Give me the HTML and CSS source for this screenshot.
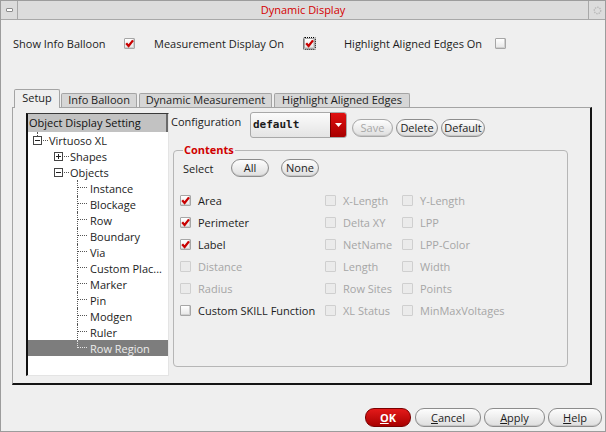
FILE: index.html
```html
<!DOCTYPE html>
<html>
<head>
<meta charset="utf-8">
<link rel="stylesheet" href="styles.css">
</head>
<body>
<div class="window">
  <div class="titlebar">
    <div class="tb-btn tb-left"><span class="tb-min"></span></div>
    <div class="tb-title">Dynamic Display</div>
    <div class="tb-btn tb-right">
      <svg width="9" height="9" viewBox="0 0 9 9"><circle cx="4.5" cy="4.5" r="3.2" fill="none" stroke="#b8b8b8" stroke-width="1.4" stroke-dasharray="1.4 1"/></svg>
    </div>
  </div>

  <div class="toprow">
    <span class="tl w1">Show Info Balloon</span>
    <span class="cb checked"><svg viewBox="0 0 11 11"><path d="M2.2 5.2 L4.6 8 L9 2.4" /></svg></span>
    <span class="tl w2">Measurement Display On</span>
    <span class="cb checked focus"><svg viewBox="0 0 11 11"><path d="M2.2 5.2 L4.6 8 L9 2.4" /></svg></span>
    <span class="tl w3">Highlight Aligned Edges On</span>
    <span class="cb"></span>
  </div>

  <div class="tabs">
    <div class="tab active t1">Setup</div>
    <div class="tab t2">Info Balloon</div>
    <div class="tab t3">Dynamic Measurement</div>
    <div class="tab t4">Highlight Aligned Edges</div>
  </div>

  <div class="panel">
    <div class="tree">
      <div class="tree-head">Object Display Setting</div>
      <div class="row root"><span class="exp minus"></span><span class="dots"></span><span class="lbl">Virtuoso XL</span></div>
      <div class="row lvl1"><span class="exp plus"></span><span class="dots"></span><span class="lbl">Shapes</span></div>
      <div class="row lvl1"><span class="exp minus"></span><span class="dots"></span><span class="lbl">Objects</span></div>
      <div class="row leaf first"><span class="branch"></span><span class="lbl">Instance</span></div>
      <div class="row leaf"><span class="branch"></span><span class="lbl">Blockage</span></div>
      <div class="row leaf"><span class="branch"></span><span class="lbl">Row</span></div>
      <div class="row leaf"><span class="branch"></span><span class="lbl">Boundary</span></div>
      <div class="row leaf"><span class="branch"></span><span class="lbl">Via</span></div>
      <div class="row leaf"><span class="branch"></span><span class="lbl">Custom Plac...</span></div>
      <div class="row leaf"><span class="branch"></span><span class="lbl">Marker</span></div>
      <div class="row leaf"><span class="branch"></span><span class="lbl">Pin</span></div>
      <div class="row leaf"><span class="branch"></span><span class="lbl">Modgen</span></div>
      <div class="row leaf"><span class="branch"></span><span class="lbl">Ruler</span></div>
      <div class="row leaf last selected"><span class="branch"></span><span class="lbl">Row Region</span></div>
    </div>

    <div class="setup">
      <div class="config">
        <span class="cfg-label">Configuration</span>
        <div class="combo">
          <span class="combo-text">default</span>
          <span class="combo-arrow"><svg width="7" height="4" viewBox="0 0 7 4"><path d="M0 0 L7 0 L3.5 4 Z" fill="#fff"/></svg></span>
        </div>
        <span class="btn disabled b-save">Save</span>
        <span class="btn b-delete">Delete</span>
        <span class="btn b-default">Default</span>
      </div>

      <div class="group">
        <span class="group-title">Contents</span>
        <div class="select-row">
          <span class="sel-label">Select</span>
          <span class="btn b-all">All</span>
          <span class="btn b-none">None</span>
        </div>
        <div class="grid">
          <div class="cell"><span class="cb checked"><svg viewBox="0 0 11 11"><path d="M2.2 5.2 L4.6 8 L9 2.4" /></svg></span><span>Area</span></div>
          <div class="cell dis"><span class="cb disabled"></span><span>X-Length</span></div>
          <div class="cell dis"><span class="cb disabled"></span><span>Y-Length</span></div>

          <div class="cell"><span class="cb checked"><svg viewBox="0 0 11 11"><path d="M2.2 5.2 L4.6 8 L9 2.4" /></svg></span><span>Perimeter</span></div>
          <div class="cell dis"><span class="cb disabled"></span><span>Delta XY</span></div>
          <div class="cell dis"><span class="cb disabled"></span><span>LPP</span></div>

          <div class="cell"><span class="cb checked"><svg viewBox="0 0 11 11"><path d="M2.2 5.2 L4.6 8 L9 2.4" /></svg></span><span>Label</span></div>
          <div class="cell dis"><span class="cb disabled"></span><span>NetName</span></div>
          <div class="cell dis"><span class="cb disabled"></span><span>LPP-Color</span></div>

          <div class="cell dis"><span class="cb disabled"></span><span>Distance</span></div>
          <div class="cell dis"><span class="cb disabled"></span><span>Length</span></div>
          <div class="cell dis"><span class="cb disabled"></span><span>Width</span></div>

          <div class="cell dis"><span class="cb disabled"></span><span>Radius</span></div>
          <div class="cell dis"><span class="cb disabled"></span><span>Row Sites</span></div>
          <div class="cell dis"><span class="cb disabled"></span><span>Points</span></div>

          <div class="cell"><span class="cb"></span><span>Custom SKILL Function</span></div>
          <div class="cell dis"><span class="cb disabled"></span><span>XL Status</span></div>
          <div class="cell dis"><span class="cb disabled"></span><span>MinMaxVoltages</span></div>
        </div>
      </div>
    </div>
  </div>

  <div class="footer">
    <span class="btn ok"><u>O</u>K</span>
    <span class="btn b-cancel"><u>C</u>ancel</span>
    <span class="btn b-apply"><u>A</u>pply</span>
    <span class="btn b-help"><u>H</u>elp</span>
  </div>
</div>
</body>
</html>
```

FILE: styles.css
```css
* { box-sizing: border-box; }

html, body {
  margin: 0;
  padding: 0;
  background: #efefef;
}

body {
  font-family: "Open Sans", "Noto Sans", sans-serif;
  font-size: 11px;
  color: #1c1c1c;
}

.window {
  width: 606px;
  height: 432px;
  border: 1px solid #9c9c9c;
  background: #efefef;
  display: flex;
  flex-direction: column;
}

/* title bar */
.titlebar {
  height: 19px;
  display: flex;
  background: #dcdcdc;
  border-bottom: 1px solid #a8a8a8;
}
.tb-btn {
  width: 17px;
  display: flex;
  align-items: center;
  justify-content: center;
}
.tb-left { border-right: 1px solid #a8a8a8; }
.tb-right { border-left: 1px solid #a8a8a8; }
.tb-min {
  width: 7px;
  height: 4px;
  border: 1px solid #8c8c8c;
  border-radius: 1px;
  background: #fff;
}
.tb-title {
  flex: 1;
  text-align: center;
  line-height: 18px;
  color: #d40000;
}

/* top row */
.toprow {
  display: flex;
  align-items: center;
  height: 18px;
  margin-top: 14px;
  padding-left: 12px;
}
.tl { display: inline-block; }
.w1 { width: 111px; }
.w2 { width: 150px; margin-left: 19px; }
.w3 { width: 151px; margin-left: 29px; }

/* checkbox */
.cb {
  display: inline-block;
  width: 11px;
  height: 11px;
  flex: none;
  border: 1px solid #a6a6a6;
  border-radius: 1px;
  background: linear-gradient(#ffffff, #e6e6e6);
  box-shadow: inset -1px -1px 0 #d0d0d0;
  position: relative;
}
.cb svg {
  display: block;
  width: 11px;
  height: 11px;
  margin: -1px 0 0 -1px;
}
.cb svg path {
  fill: none;
  stroke: #c80000;
  stroke-width: 2.3;
}
.cb.focus {
  outline: 1px dotted #000;
  outline-offset: 0;
}
.cb.disabled {
  background: #ebebeb;
  border-color: #cfcfcf;
  box-shadow: none;
}

/* tabs */
.tabs {
  display: flex;
  align-items: flex-end;
  height: 18px;
  margin-top: 37px;
  padding-left: 13px;
  position: relative;
  z-index: 2;
}
.tab {
  height: 14px;
  line-height: 12px;
  text-align: center;
  background: #d6d6d6;
  border: 1px solid #a4a4a4;
  border-bottom: none;
  border-radius: 2px 2px 0 0;
  color: #1c1c1c;
}
.tab.active {
  height: 19px;
  margin-bottom: -1px;
  line-height: 16px;
  background: #efefef;
}
.t1 { width: 46px; }
.t2 { width: 76px; margin-left: 1px; }
.t3 { width: 133px; margin-left: 2px; }
.t4 { width: 136px; margin-left: 2px; }

/* panel */
.panel {
  width: 580px;
  height: 278px;
  margin-left: 11px;
  border-top: 1px solid #a4a4a4;
  border-left: 1px solid #a4a4a4;
  border-right: 2px solid #141414;
  border-bottom: 2px solid #141414;
  display: flex;
  align-items: flex-start;
  padding: 4px 0 0 13px;
}

/* tree */
.tree {
  width: 143px;
  height: 263px;
  margin-top: 1px;
  background: #fff;
  border-left: 2px solid #111;
  border-top: 1px solid #3a3a3a;
  border-right: 1px solid #e4e4e4;
  border-bottom: 1px solid #e4e4e4;
  padding-right: 0;
}
.tree-head {
  height: 18px;
  line-height: 17px;
  padding-left: 1px;
  background: #c2c2c2;
  border-right: 2px solid #6a6a6a;
  color: #111;
}
.row {
  height: 16px;
  display: flex;
  align-items: center;
  position: relative;
  color: #1c1c1c;
}
.exp {
  width: 9px;
  height: 9px;
  border: 1px solid #444;
  background: #fff;
  position: relative;
  flex: none;
}
.exp::before {
  content: "";
  position: absolute;
  left: 1px;
  top: 3px;
  width: 5px;
  height: 1px;
  background: #222;
}
.exp.plus::after {
  content: "";
  position: absolute;
  left: 3px;
  top: 1px;
  width: 1px;
  height: 5px;
  background: #222;
}
.dots {
  width: 5px;
  margin: 0 1px 0 1px;
  border-top: 1px dotted #555;
  flex: none;
}
.root { padding-left: 5px; }
.root::before {
  content: "";
  position: absolute;
  left: 9px;
  top: 0;
  height: 4px;
  border-left: 1px dotted #555;
}
.lvl1 { padding-left: 26px; }
.leaf { padding-left: 49px; }
.branch {
  width: 11px;
  height: 16px;
  flex: none;
  align-self: flex-start;
  border-left: 1px dotted #555;
  position: relative;
  margin-right: 2px;
}
.leaf.last .branch { height: 8px; }
.branch::after {
  content: "";
  position: absolute;
  left: 0;
  top: 7px;
  width: 9px;
  border-top: 1px dotted #555;
}
.row.selected {
  background: #7d7d7d;
  color: #ececec;
}
.row.selected .branch,
.row.selected .branch::after {
  border-color: #e6e6e6;
}

/* setup column */
.setup {
  margin-left: 1px;
  flex: 1;
}
.config {
  display: flex;
  align-items: flex-start;
  height: 26px;
}
.cfg-label {
  width: 80px;
  line-height: 20px;
  padding-left: 1px;
}
.combo {
  width: 97px;
  height: 26px;
  display: flex;
  border: 1px solid #a8a8a8;
  border-radius: 3px;
  background: linear-gradient(#fbfbfb, #e4e4e4);
  overflow: hidden;
}
.combo-text {
  flex: 1;
  padding-left: 2px;
  line-height: 23px;
  font-family: "DejaVu Sans Mono", "Liberation Mono", monospace;
  font-weight: bold;
  font-size: 11px;
  color: #1a1a1a;
}
.combo-arrow {
  width: 16px;
  display: flex;
  align-items: center;
  justify-content: center;
  background: linear-gradient(#e01010, #a80000);
  border-left: 1px solid #7a0000;
}

.btn {
  display: inline-block;
  height: 18px;
  line-height: 16px;
  text-align: center;
  border: 1px solid #8c8c8c;
  border-radius: 9px;
  background: linear-gradient(#fdfdfd, #dedede);
  box-shadow: inset 0 -1px 0 #c8c8c8;
  color: #1c1c1c;
}
.btn.disabled { color: #a8a8a8; border-color: #a8a8a8; }
.b-save { width: 41px; margin: 7px 0 0 5px; }
.b-delete { width: 42px; margin: 7px 0 0 3px; }
.b-default { width: 44px; margin: 7px 0 0 3px; }

/* group box */
.group {
  width: 395px;
  height: 217px;
  margin: 12px 0 0 3px;
  border: 1px solid #b6b6b6;
  border-radius: 4px;
  position: relative;
  padding: 8px 0 0 0;
}
.group-title {
  position: absolute;
  left: 9px;
  top: -9px;
  padding: 0 1px;
  line-height: 16px;
  background: #efefef;
  color: #d00000;
  font-weight: bold;
}
.select-row {
  display: flex;
  align-items: center;
  height: 18px;
  padding-left: 9px;
}
.sel-label { width: 48px; }
.b-all { width: 38px; height: 18px; }
.b-none { width: 38px; height: 18px; margin-left: 12px; }

.grid {
  display: grid;
  grid-template-columns: 145px 77px 1fr;
  grid-auto-rows: 22px;
  margin-top: 12px;
  padding-left: 6px;
}
.cell {
  display: flex;
  align-items: center;
  gap: 7px;
  white-space: nowrap;
}
.cell.dis { color: #a6a6a6; }

/* footer */
.footer {
  display: flex;
  justify-content: flex-end;
  margin-top: 23px;
  padding-right: 3px;
}
.footer .btn { height: 19px; line-height: 17px; }
.footer u { text-decoration: underline; }
.ok {
  width: 46px;
  background: linear-gradient(#e41a1a, #a80000);
  border-color: #7a0000;
  box-shadow: none;
  color: #fff;
  font-weight: bold;
}
.b-cancel { width: 66px; margin-left: 4px; }
.b-apply { width: 61px; margin-left: 3px; }
.b-help { width: 54px; margin-left: 3px; }
```
